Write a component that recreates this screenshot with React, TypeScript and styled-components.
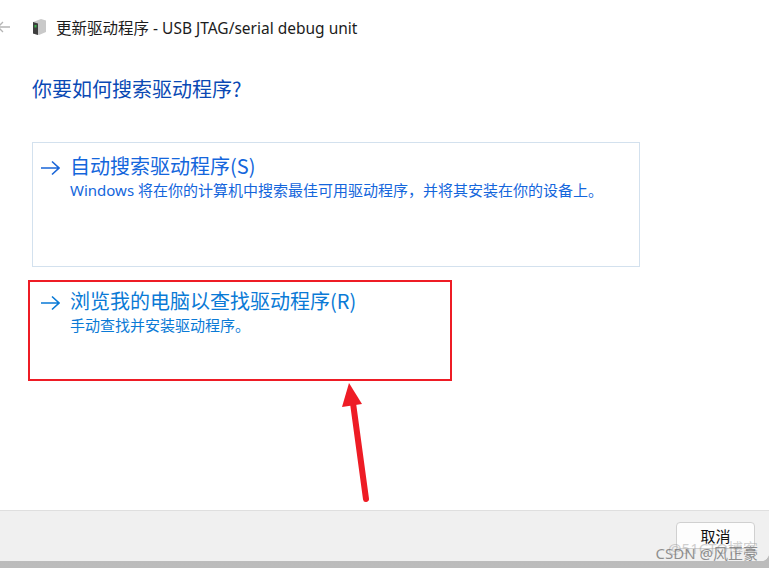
import styled, { createGlobalStyle } from "styled-components";

const GlobalStyle = createGlobalStyle`
    html, body {
        margin: 0;
        padding: 0;
        background: #b4b4b4;
    }
    body {
        font-family: "Liberation Sans", "Noto Sans CJK SC", sans-serif;
    }
`;

const Page = styled.div`
    position: relative;
    width: 769px;
    height: 568px;
    overflow: hidden;
    background: linear-gradient(#a9a9a9, #bcbcbc);
`;

const Dialog = styled.div`
    width: 769px;
    height: 561px;
    display: flex;
    flex-direction: column;
    background: #fff;
    border-bottom-right-radius: 8px;
    overflow: hidden;
`;

const TitleBar = styled.div`
    height: 54px;
    display: flex;
    align-items: center;
    flex-shrink: 0;
`;

const BackArrow = styled.svg`
    width: 10px;
    height: 12px;
    margin-right: 21px;
`;

const DriveIcon = styled.svg`
    width: 17px;
    height: 18px;
    margin-right: 8px;
`;

const Title = styled.span`
    font-family: "Noto Sans", "Noto Sans CJK SC", sans-serif;
    font-size: 15.5px;
    color: #1c1c1c;
`;

const Content = styled.main`
    flex: 1;
    padding: 22px 0 0 32px;
`;

const Heading = styled.h1`
    margin: 0 0 40px;
    font-family: "Noto Sans CJK SC", sans-serif;
    font-weight: 400;
    font-size: 20px;
    line-height: 26px;
    color: #0a49b4;
`;

const OptionCard = styled.div<{ $outlined?: boolean }>`
    box-sizing: border-box;
    width: 608px;
    height: ${(p) => (p.$outlined ? "125px" : "96px")};
    margin-bottom: ${(p) => (p.$outlined ? "10px" : "0")};
    padding: 9px 0 0 7px;
    display: flex;
    border: 1px solid ${(p) => (p.$outlined ? "#d3e1ee" : "transparent")};
`;

const ArrowIcon = styled.svg`
    width: 20px;
    height: 16px;
    margin: 8px 10px 0 0;
    flex-shrink: 0;
`;

const OptionText = styled.div<{ $dark?: boolean }>`
    color: ${(p) => (p.$dark ? "#1466dc" : "#0a7ad6")};
`;

const OptionTitle = styled.div`
    font-family: "Noto Sans CJK SC", sans-serif;
    font-size: 20px;
    line-height: 28px;
`;

const OptionDesc = styled.div`
    font-family: "Noto Sans", "Noto Sans CJK SC", sans-serif;
    font-size: 15px;
    line-height: 20px;
`;

const Footer = styled.footer`
    height: 51px;
    flex-shrink: 0;
    box-sizing: border-box;
    display: flex;
    justify-content: flex-end;
    padding: 11px 14px 0 0;
    background: #f0f0f0;
    border-top: 1px solid #dfdfdf;
`;

const CancelButton = styled.button`
    box-sizing: border-box;
    width: 79px;
    height: 27px;
    padding: 0;
    background: #fdfdfd;
    border: 1px solid #d0d0d0;
    border-radius: 4px;
    font-family: "Noto Sans CJK SC", sans-serif;
    font-size: 15px;
    line-height: 25px;
    color: #111;
`;

const Highlight = styled.div`
    position: absolute;
    left: 28px;
    top: 280px;
    width: 424px;
    height: 101px;
    box-sizing: border-box;
    border: 2px solid #ee1c25;
`;

const RedArrow = styled.svg`
    position: absolute;
    left: 335px;
    top: 375px;
    width: 50px;
    height: 140px;
`;

const Watermark = styled.div`
    position: absolute;
    right: 11px;
    bottom: 6px;
    font-family: "Noto Sans", "Noto Sans CJK SC", sans-serif;
    font-size: 15px;
    line-height: 18px;
    color: rgba(110, 110, 110, 0.75);
    white-space: nowrap;
`;

const WatermarkBack = styled(Watermark)`
    bottom: 11px;
    color: rgba(150, 150, 150, 0.45);
`;

function Arrow({ color }: { color: string }) {
    return (
        <ArrowIcon viewBox="0 0 20 16">
            <path d="M1 8H19M12 1.5L19 8L12 14.5" fill="none" stroke={color} strokeWidth="1.6" />
        </ArrowIcon>
    );
}

export default function App() {
    return (
        <Page>
            <GlobalStyle />
            <Dialog>
                <TitleBar>
                    <BackArrow viewBox="0 0 10 12">
                        <path d="M-3 6H10M3 1L-2 6L3 11" fill="none" stroke="#b5b5b5" strokeWidth="1.3" />
                    </BackArrow>
                    <DriveIcon viewBox="0 0 17 18">
                        <path d="M2 4L10 1L15 2.5V14L8 17L2 15.5Z" fill="#c9c9c9" />
                        <path d="M2 4L7 5.5V17L2 15.5Z" fill="#3e3e3e" />
                        <path d="M3.5 7H5.5V9.5H3.5Z" fill="#39b54a" />
                    </DriveIcon>
                    <Title>更新驱动程序 - USB JTAG/serial debug unit</Title>
                </TitleBar>
                <Content>
                    <Heading>你要如何搜索驱动程序?</Heading>
                    <OptionCard $outlined>
                        <Arrow color="#1a66d8" />
                        <OptionText $dark>
                            <OptionTitle>自动搜索驱动程序(S)</OptionTitle>
                            <OptionDesc>Windows 将在你的计算机中搜索最佳可用驱动程序，并将其安装在你的设备上。</OptionDesc>
                        </OptionText>
                    </OptionCard>
                    <OptionCard>
                        <Arrow color="#0a7ad6" />
                        <OptionText>
                            <OptionTitle>浏览我的电脑以查找驱动程序(R)</OptionTitle>
                            <OptionDesc>手动查找并安装驱动程序。</OptionDesc>
                        </OptionText>
                    </OptionCard>
                </Content>
                <Footer>
                    <CancelButton>取消</CancelButton>
                </Footer>
            </Dialog>
            <Highlight />
            <RedArrow viewBox="0 0 50 140">
                <path d="M31 124L18 28" fill="none" stroke="#ee1c25" strokeWidth="6" strokeLinecap="round" />
                <path d="M14 8L7 32L27 29Z" fill="#ee1c25" />
            </RedArrow>
            <WatermarkBack>@51CTO博客</WatermarkBack>
            <Watermark>CSDN @风正豪</Watermark>
        </Page>
    );
}
